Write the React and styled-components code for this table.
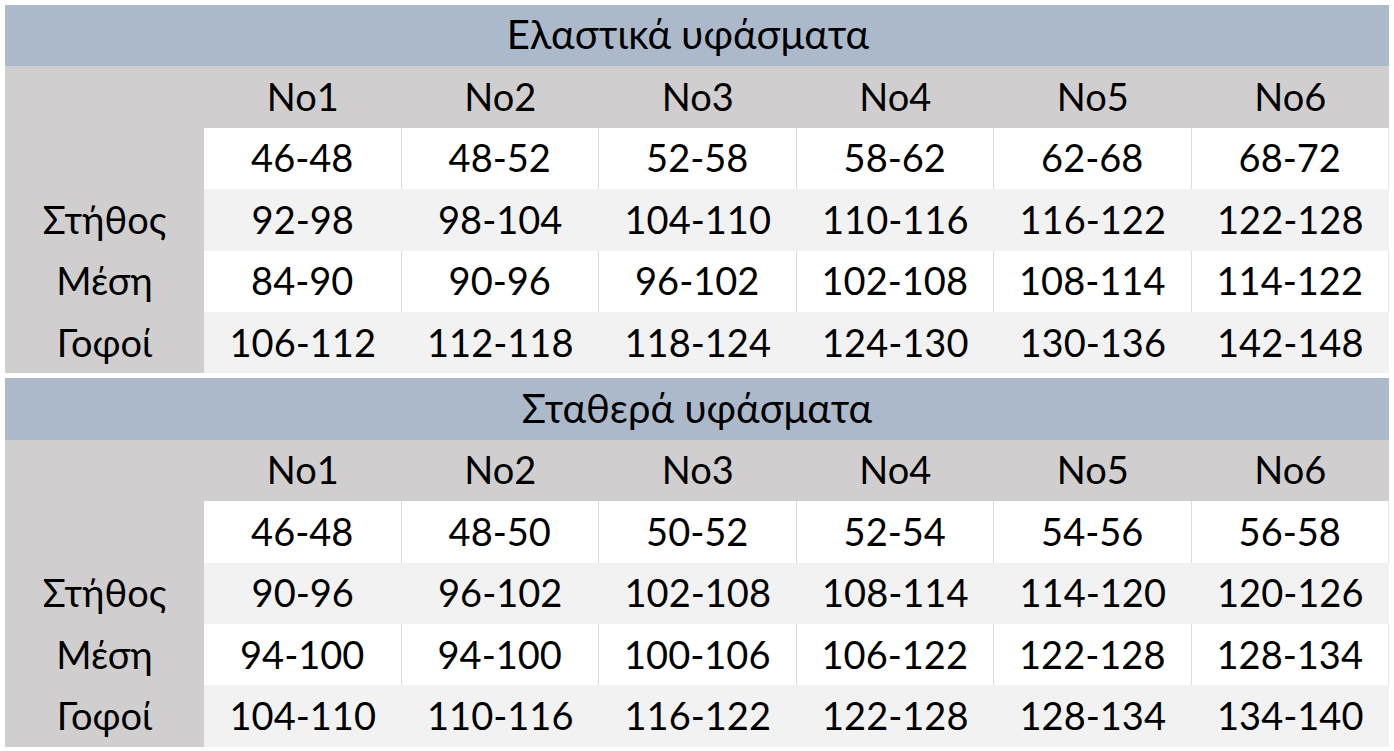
import React from 'react'
import styled, { createGlobalStyle } from 'styled-components'

const GlobalStyle = createGlobalStyle`
  html, body {
    margin: 0;
    padding: 0;
    background: #fff;
  }
  body {
    font-family: Lato, "Noto Sans", "Open Sans", sans-serif;
    color: #000;
  }
`

const Page = styled.div`
  width: 1394px;
  height: 751px;
  padding: 5px 5px 0 5px;
  box-sizing: border-box;
  display: flex;
  flex-direction: column;
  gap: 5px;
  overflow: hidden;
`

const Table = styled.div`
  display: grid;
  grid-template-columns: 199px repeat(6, 1fr);
  grid-auto-rows: 61.4px;
  font-size: 38px;
`

const Title = styled.div`
  grid-column: 1 / -1;
  background: #acb9ca;
  display: flex;
  align-items: center;
  justify-content: center;
  font-size: 40px;
  padding-right: ${p => p.$shift || 0}px;
  padding-bottom: 3px;
`

const Cell = styled.div`
  display: flex;
  align-items: center;
  justify-content: center;
  padding-bottom: 2px;
  white-space: nowrap;
  box-sizing: border-box;
  background: ${p =>
    p.$kind === 'label' ? '#d0cece' :
    p.$kind === 'head' ? '#d0cece' :
    p.$kind === 'alt' ? '#f2f2f2' : '#ffffff'};
  border-right: ${p => p.$kind === 'plain' ? '1px solid #dadada' : 'none'};

  &:last-child {
    border-right: ${p => p.$kind === 'plain' ? '1px solid #e6e6e6' : 'none'};
  }
`

const Row = styled.div`
  display: contents;
`

const tables = [
  {
    title: 'Ελαστικά υφάσματα',
    shift: 18,
    rows: [
      ['', ['46-48', '48-52', '52-58', '58-62', '62-68', '68-72']],
      ['Στήθος', ['92-98', '98-104', '104-110', '110-116', '116-122', '122-128']],
      ['Μέση', ['84-90', '90-96', '96-102', '102-108', '108-114', '114-122']],
      ['Γοφοί', ['106-112', '112-118', '118-124', '124-130', '130-136', '142-148']],
    ],
  },
  {
    title: 'Σταθερά υφάσματα',
    shift: 0,
    rows: [
      ['', ['46-48', '48-50', '50-52', '52-54', '54-56', '56-58']],
      ['Στήθος', ['90-96', '96-102', '102-108', '108-114', '114-120', '120-126']],
      ['Μέση', ['94-100', '94-100', '100-106', '106-122', '122-128', '128-134']],
      ['Γοφοί', ['104-110', '110-116', '116-122', '122-128', '128-134', '134-140']],
    ],
  },
]

const sizes = ['No1', 'No2', 'No3', 'No4', 'No5', 'No6']

const SizeTable = ({ title, shift, rows }) => (
  <Table>
    <Title $shift={shift}>{title}</Title>
    <Row>
      <Cell $kind="label" />
      {sizes.map(s => <Cell key={s} $kind="head">{s}</Cell>)}
    </Row>
    {rows.map(([label, values], i) => (
      <Row key={i}>
        <Cell $kind="label">{label}</Cell>
        {values.map((v, j) => (
          <Cell key={j} $kind={i % 2 === 0 ? 'plain' : 'alt'}>{v}</Cell>
        ))}
      </Row>
    ))}
  </Table>
)

export default function App() {
  return (
    <>
      <GlobalStyle />
      <Page>
        {tables.map(t => <SizeTable key={t.title} {...t} />)}
      </Page>
    </>
  )
}
